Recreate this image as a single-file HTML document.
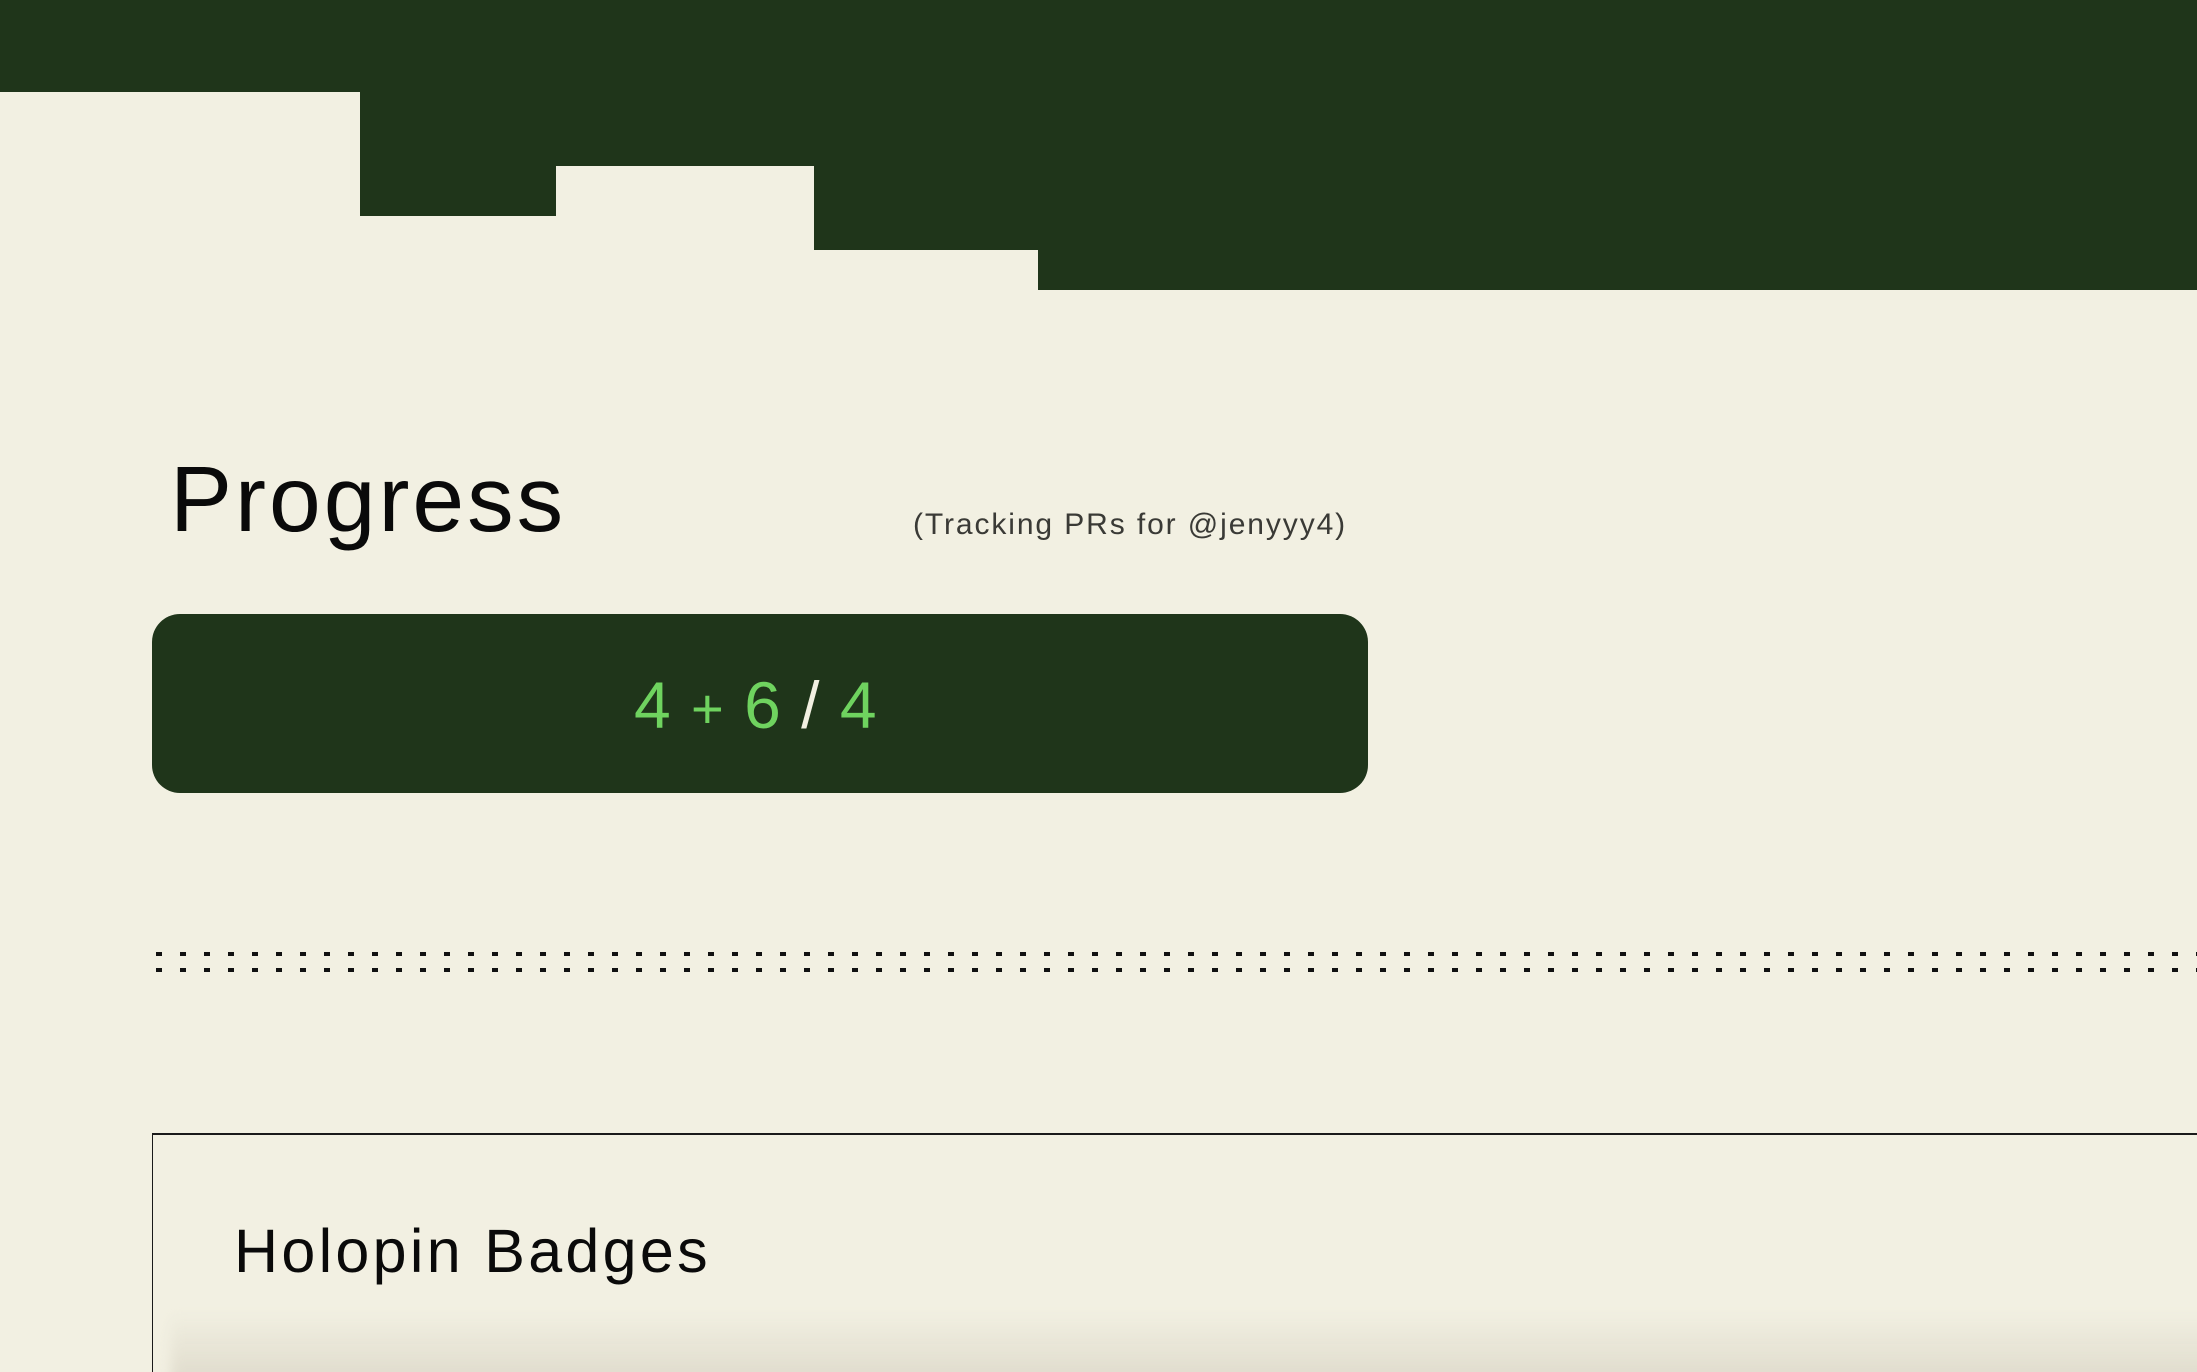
<!DOCTYPE html>
<html><head><meta charset="utf-8"><style>
html,body{margin:0;padding:0;width:2197px;height:1372px;overflow:hidden}
body{background:#f2f0e2;position:relative;font-family:"Liberation Sans",sans-serif}
.d{position:absolute;background:#1f351a}
.t{position:absolute;white-space:nowrap;line-height:1}
.dots{position:absolute;left:156px;width:2041px;height:4px;background-image:linear-gradient(90deg,#111 6px,transparent 6px);background-size:24px 4px}
</style></head><body>
<div class="d" style="left:0;top:0;width:2197px;height:92px"></div>
<div class="d" style="left:360px;top:0;width:196px;height:216px"></div>
<div class="d" style="left:556px;top:0;width:258px;height:166px"></div>
<div class="d" style="left:814px;top:0;width:224px;height:250px"></div>
<div class="d" style="left:1038px;top:0;width:1159px;height:290px"></div>

<div class="t" style="left:170px;top:453px;font-size:93px;letter-spacing:3px;color:#0a0a0a">Progress</div>
<div class="t" style="left:913px;top:510px;font-size:30px;letter-spacing:1.9px;color:#3a3a36">(Tracking PRs for @jenyyy4)</div>

<div style="position:absolute;left:152px;top:614px;width:1216px;height:179px;background:#1f351a;border-radius:28px"></div>
<div class="t" style="left:634px;top:672px;font-size:66px;color:#6fd35f;letter-spacing:1px">4 <span style="font-size:56px">+</span> 6<span style="color:#f2f0e2"> / </span>4</div>

<div class="dots" style="top:952px"></div>
<div class="dots" style="top:968px"></div>

<div style="position:absolute;left:152px;top:1133px;width:2045px;height:239px;border-top:2px solid #1a1a1a;border-left:1.5px solid #1a1a1a;box-sizing:border-box;overflow:hidden">
<div style="position:absolute;left:18px;top:177px;width:2100px;height:80px;background:linear-gradient(180deg,rgba(226,222,206,0),#e0dccd 80%);filter:blur(6px)"></div>
</div>
<div class="t" style="left:234px;top:1221px;font-size:61px;letter-spacing:3.3px;color:#0a0a0a">Holopin Badges</div>
</body></html>
